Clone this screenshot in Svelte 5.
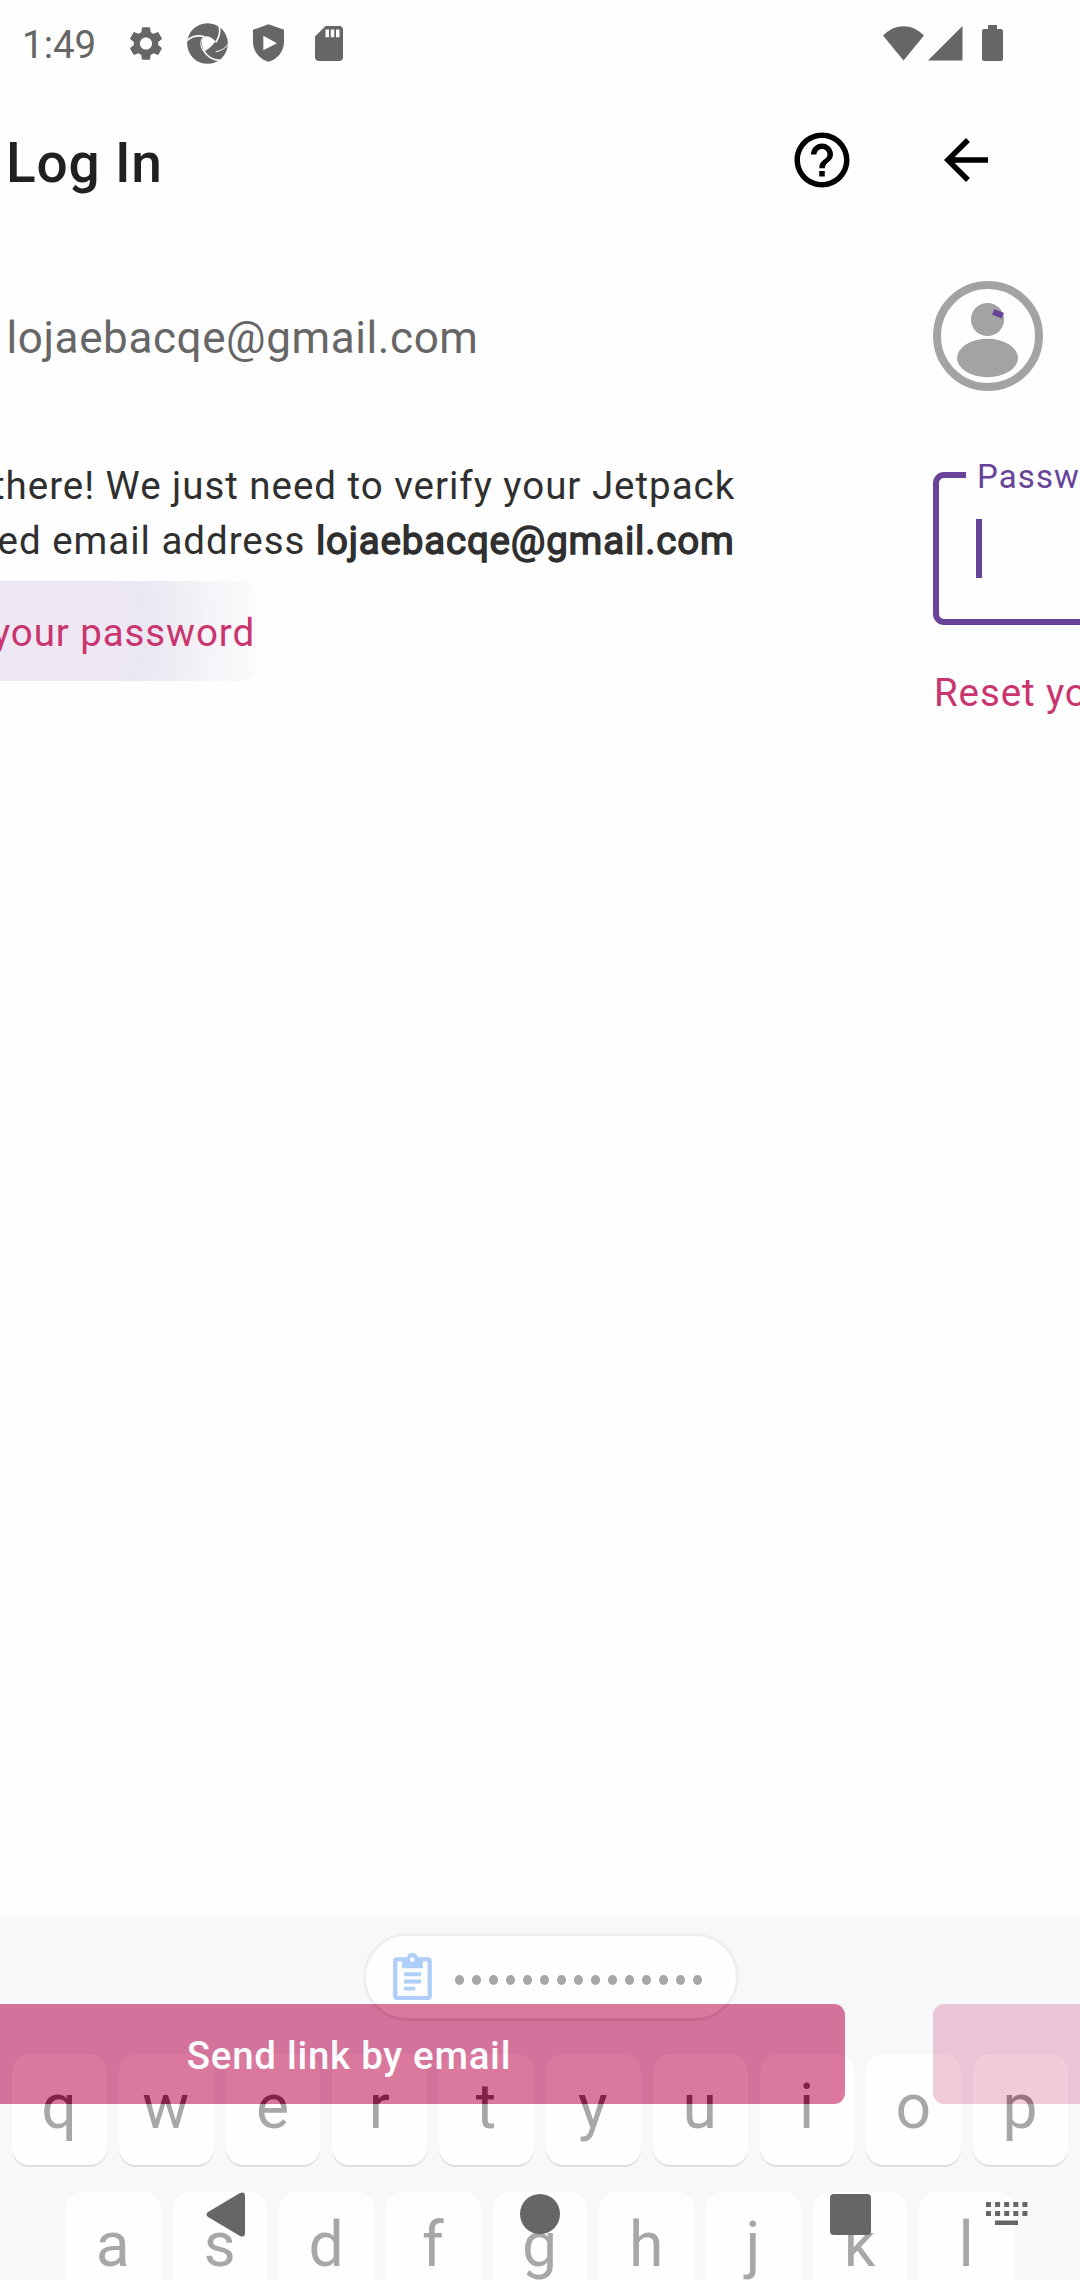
<script>
  const email = 'lojaebacqe@gmail.com';
  const rowOne = 'qwertyuiop'.split('');
  const rowTwo = 'asdfghjkl'.split('');
  const dots = Array.from({ length: 15 });
  const keyCols = [0, 1, 2, 3, 4];
</script>

<div class="screen">
  <header class="status">
    <span class="time">1:49</span>
    <svg class="gear" viewBox="2 2 20 20" width="34" height="35"><path d="M19.14 12.94c.04-.3.06-.61.06-.94 0-.32-.02-.64-.07-.94l2.03-1.58c.18-.14.23-.41.12-.61l-1.92-3.32c-.12-.22-.37-.29-.59-.22l-2.39.96c-.5-.38-1.03-.7-1.62-.94l-.36-2.54c-.04-.24-.24-.41-.48-.41h-3.84c-.24 0-.43.17-.47.41l-.36 2.54c-.59.24-1.13.57-1.62.94l-2.39-.96c-.22-.08-.47 0-.59.22L2.74 8.87c-.12.21-.08.47.12.61l2.03 1.58c-.05.3-.09.63-.09.94s.02.64.07.94l-2.03 1.58c-.18.14-.23.41-.12.61l1.92 3.32c.12.22.37.29.59.22l2.39-.96c.5.38 1.03.7 1.62.94l.36 2.54c.05.24.24.41.48.41h3.84c.24 0 .44-.17.47-.41l.36-2.54c.59-.24 1.13-.56 1.62-.94l2.39.96c.22.08.47 0 .59-.22l1.92-3.32c.12-.22.07-.47-.12-.61l-2.01-1.58zM12 15.6c-1.98 0-3.6-1.62-3.6-3.6s1.62-3.6 3.6-3.6 3.6 1.62 3.6 3.6-1.62 3.6-3.6 3.6z" /></svg>
    <svg class="shutter" viewBox="0 0 124 124" width="41" height="41">
      <circle cx="62" cy="62" r="61.5" />
      <path class="hole" d="M48 42Q66 34 86 55Q74 74 52 86Q40 64 48 42Z" />
      <g class="slit">
        <path d="M0 53Q22 34 52 41" />
        <path d="M97 8Q104 34 87 58" />
        <path d="M124 64Q114 82 87 87" class="thin" />
        <path d="M50 83Q66 112 99 113" />
        <path d="M46 46Q36 66 50 86" class="thin" />
      </g>
    </svg>
    <svg class="shield" viewBox="0 0 93 113" width="31" height="38"><path fill-rule="evenodd" d="M46.500 0L93 17V52C93 82 74 105 46.500 113C19 105 0 82 0 52V17ZM31 35V78L72 57Z" /></svg>
    <svg class="sd" viewBox="4 2 16 20" width="28" height="35"><path d="M18 2h-8L4.020 8 4 20c0 1.100.9 2 2 2h12c1.100 0 2-.9 2-2V4c0-1.100-.9-2-2-2zm-6 6.400h-2V4h2v4.400zm3 0h-2V4h2v4.400zm3 0h-2V4h2v4.400z" /></svg>
    <svg class="wifi" viewBox="0 0 41 35" width="41" height="35"><path d="M0 9.500C12-3 29-3 41 9.500L20.500 34.500Z" /></svg>
    <svg class="signal" viewBox="0 0 35 35" width="35" height="35"><path d="M0 34.500L34.500 0V34.500Z" /></svg>
    <svg class="battery" viewBox="0 0 21 36" width="21" height="36"><path d="M6 0h9v4h4a2 2 0 0 1 2 2v28a2 2 0 0 1-2 2H2a2 2 0 0 1-2-2V6a2 2 0 0 1 2-2h4z" /></svg>
  </header>

  <main class="pager">
    <section class="page">
      <div class="toolbar">
        <h1>Log In</h1>
        <svg viewBox="0 0 24 24" width="66" height="66"><path d="M11 18h2v-2h-2v2zm1-16C6.480 2 2 6.480 2 12s4.480 10 10 10 10-4.480 10-10S17.520 2 12 2zm0 18c-4.410 0-8-3.590-8-8s3.590-8 8-8 8 3.590 8 8-3.590 8-8 8zm0-14c-2.210 0-4 1.790-4 4h2c0-1.100.9-2 2-2s2 .9 2 2c0 2-3 1.750-3 5h2c0-2.250 3-2.500 3-5 0-2.210-1.790-4-4-4z" /></svg>
      </div>
      <div class="account">{email}</div>
      <p class="info">Almost there! We just need to verify your Jetpack<br />connected email address <span class="strong">{email}</span></p>
      <button class="link pressed">Or use your password</button>
      <button class="primary">Send link by email</button>
    </section>

    <section class="page">
      <div class="toolbar next">
        <svg viewBox="0 0 24 24" width="66" height="66"><path d="M20 11H7.830l5.590-5.590L12 4l-8 8 8 8 1.410-1.410L7.830 13H20v-2z" /></svg>
      </div>
      <svg class="avatar" viewBox="0 0 110 110" width="110" height="110">
        <circle class="ring" cx="55" cy="55" r="51" />
        <circle cx="54.500" cy="38.500" r="16.600" />
        <ellipse cx="54.500" cy="77" rx="30.500" ry="19.200" />
        <path class="spark" d="M61.500 28L71 32L68.500 37.500L59 33.500Z" />
      </svg>
      <div class="field">
        <span class="label">Password</span>
        <span class="caret"></span>
      </div>
      <button class="link reset">Reset your password</button>
      <button class="primary disabled"></button>
    </section>
  </main>

  <div class="keyboard">
    <div class="chip">
      <svg viewBox="0 0 117 142" width="39" height="47"><path fill-rule="evenodd" d="M12 13H42C44 4 50 0 58 0S73 4 75 13H105Q117 13 117 25V130Q117 142 105 142H12Q0 142 0 130V25Q0 13 12 13ZM13 26V130H104V26H90V46H27V26ZM58 13A7 7 0 1 0 58 27A7 7 0 1 0 58 13Z" /><path d="M33 58H84V70H33ZM33 80H84V92H33ZM33 102H67V113H33Z" /></svg>
      <span class="dots">{#each dots as _}<i></i>{/each}</span>
    </div>
    <div class="row">{#each rowOne as k}<span class="key">{k}</span>{/each}</div>
    <div class="row second">{#each rowTwo as k}<span class="key">{k}</span>{/each}</div>
  </div>

  <nav class="nav">
    <svg class="back" viewBox="0 0 39 45" width="39" height="45"><path d="M2 20L34 1Q39-1 39 4V41Q39 46 34 44L2 25Q-1 22.500 2 20Z" /></svg>
    <svg class="home" viewBox="0 0 40 40" width="40" height="40"><circle cx="20" cy="20" r="20" /></svg>
    <svg class="recent" viewBox="0 0 41 41" width="41" height="41"><rect width="41" height="41" rx="4" /></svg>
    <svg class="ime" viewBox="0 0 42 24" width="42" height="24">
      {#each keyCols as c}
        <rect x={c * 9.1} y="0" width="5" height="5" /><rect x={c * 9.1} y="9" width="5" height="5" />
      {/each}
      <rect x="9" y="18.500" width="23" height="4.500" />
    </svg>
  </nav>
</div>

<style>
  :global(body) { margin: 0; background: #fefefe; }
  .screen {
    position: relative;
    width: 1080px;
    height: 2280px;
    overflow: hidden;
    display: flex;
    flex-direction: column;
    background: #fefefe;
    font-family: Roboto, sans-serif;
  }
  svg { display: block; flex: none; }

  .status {
    height: 88px;
    box-sizing: border-box;
    padding: 0 77px 2px 22px;
    display: flex;
    align-items: center;
    fill: #666;
    color: #666;
  }
  .time { width: 107px; font-size: 38.5px; line-height: 46px; padding-top: 3px; }
  .shutter { margin-left: 24px; }
  .hole { fill: #fefefe; }
  .slit { fill: none; stroke: #fefefe; stroke-width: 5; }
  .thin { stroke-width: 3; }
  .shield { margin-left: 25px; }
  .sd { margin-left: 31px; }
  .wifi { margin-left: auto; }
  .signal { margin-left: 4px; }
  .battery { margin-left: 19px; }

  .pager { flex: 1; display: flex; margin-left: -191px; }
  .page {
    flex: none;
    width: 1080px;
    box-sizing: border-box;
    padding: 0 44px 176px;
    display: flex;
    flex-direction: column;
    align-items: flex-start;
  }
  .toolbar {
    align-self: stretch;
    height: 144px;
    display: flex;
    align-items: center;
    justify-content: space-between;
    margin-right: -10.500px;
    padding-left: 153px;
  }
  .toolbar.next { padding-left: 0; margin-left: -.5px; }
  .page:first-child .toolbar svg { margin-right: .8px; }
  h1 { margin: 6px 0 0; font-size: 55px; line-height: 64px; font-weight: 500; color: #212121; letter-spacing: .8px; }
  .account {
    height: 110px;
    line-height: 115px;
    margin-top: 49px;
    padding-left: 153.500px;
    font-size: 44px;
    letter-spacing: .6px;
    color: #666;
  }
  .info {
    margin: 67px 0 0;
    font-size: 38.5px;
    line-height: 55px;
    letter-spacing: .97px;
    color: #2f2f2f;
    white-space: nowrap;
  }
  .strong { -webkit-text-stroke: 1.4px #2f2f2f; letter-spacing: .8px; }
  button { border: 0; margin: 0; padding: 0; font-family: inherit; font-size: 38.5px; }
  .link { color: #c9356e; background: none; letter-spacing: .9px; line-height: 100px; height: 100px; white-space: nowrap; }
  .pressed {
    width: 402px;
    margin-top: 13px;
    padding-top: 4px;
    line-height: 96px;
    text-align: right;
    border-radius: 11px;
    background: radial-gradient(circle at 195px 50px, #eee8f4 75px, #e9e8f2 95px, #eae9f3 108px, #f0edf3 135px, #f5f4f8 165px, #fafafd 205px);
  }
  .primary {
    align-self: stretch;
    height: 100px;
    margin-top: auto;
    padding-top: 2px;
    border-radius: 11px;
    background: #c6306a;
    color: #fff;
    font-weight: 500;
    letter-spacing: .7px;
  }
  .disabled { background: #e8afc6; }

  .avatar { fill: #a3a3a3; margin-top: 49px; }
  .ring { fill: none; stroke: #a3a3a3; stroke-width: 8; }
  .spark { fill: #674399; }
  .field {
    position: relative;
    align-self: stretch;
    height: 153px;
    box-sizing: border-box;
    margin-top: 81px;
    border: 6px solid #674399;
    border-radius: 11px;
    padding: 41px 37px;
  }
  .label {
    position: absolute;
    left: 27px;
    top: -21.500px;
    padding: 0 12px 0 11px;
    font-size: 33px;
    line-height: 39px;
    letter-spacing: 1.1px;
    background: #fefefe;
    color: #674399;
  }
  .caret { display: block; width: 6px; height: 59px; background: #674399; }
  .reset { margin: 18px 0 0 1px; }

  .keyboard {
    position: absolute;
    left: 0;
    right: 0;
    bottom: 0;
    height: 364px;
    overflow: hidden;
    opacity: .35;
    background: #ebeef3;
    display: flex;
    flex-direction: column;
    align-items: center;
  }
  .chip {
    box-sizing: border-box;
    flex: none;
    width: 376px;
    height: 88px;
    margin: 17px 0 0 22px;
    border: 3px solid #d4d4d4;
    border-radius: 44px;
    background: #fff;
    display: flex;
    align-items: center;
    padding: 0 0 2px 27px;
    fill: #1f78f4;
  }
  .dots { display: flex; gap: 7.600px; margin: 8px 0 0 23px; }
  .dots i { width: 9.400px; height: 9.800px; border-radius: 50%; background: #080808; }
  .row { flex: none; align-self: stretch; display: flex; gap: 12px; padding: 0 12px; margin-top: 33px; }
  .row.second { padding: 0 66px; margin-top: 27px; }
  .key {
    flex: 1;
    height: 111px;
    border-radius: 17px;
    background: #fff;
    box-shadow: 0 2px 0 #a8a8aa;
    text-align: center;
    font-size: 62.5px;
    line-height: 105px;
    color: #080808;
    text-indent: -1px;
  }

  .nav {
    position: absolute;
    left: 0;
    right: 0;
    bottom: 0;
    height: 132px;
    box-sizing: border-box;
    padding: 0 52px 0 206px;
    display: flex;
    align-items: center;
    fill: #666;
  }
  .home { margin-left: 275px; }
  .recent { margin: 1px 0 0 270px; }
  .ime { margin-left: auto; }
</style>
